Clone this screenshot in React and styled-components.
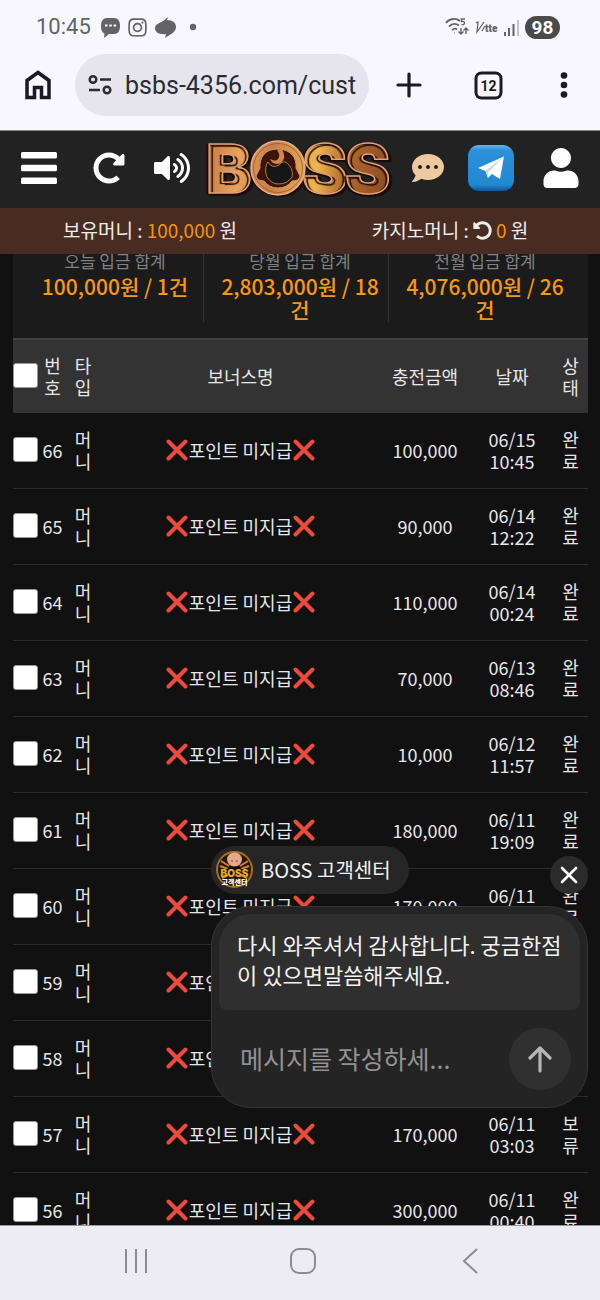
import React from 'react';
import styled, { createGlobalStyle } from 'styled-components';
import { FaBars, FaCommentDots, FaInstagram, FaRedoAlt, FaUndoAlt, FaUser, FaVolumeUp } from 'react-icons/fa';

const GlobalStyle = createGlobalStyle`
  * {
    box-sizing: border-box;
  }

  body {
    margin: 0;
    background-color: #111;
    font-family: "Noto Sans CJK KR", sans-serif;
  }

  button {
    padding: 0;
    border: 0;
    background: none;
    color: inherit;
    font: inherit;
  }
`;

const Screen = styled.div`
  display: flex;
  flex-direction: column;
  height: 100vh;
  overflow: hidden;
`;

const StatusBar = styled.div`
  display: flex;
  flex: none;
  align-items: center;
  justify-content: space-between;
  height: 54px;
  padding: 0 40px 0 36px;
  background-color: #f8f7ff;
  color: #636368;
  font-family: Roboto, sans-serif;
`;

const StatusGroup = styled.div`
  display: flex;
  align-items: center;
  gap: 6px;
`;

const Clock = styled.span`
  margin-right: 3px;
  font-size: 22px;
  line-height: 28px;
`;

const Battery = styled.span`
  width: 35px;
  border-radius: 12px;
  background-color: #4a4a4d;
  color: #fff;
  font-size: 19px;
  font-weight: 700;
  line-height: 23px;
  text-align: center;
`;

const Toolbar = styled.div`
  display: grid;
  flex: none;
  grid-template-columns: 75px minmax(0, 1fr) 80px 78px 73px;
  align-items: center;
  padding-bottom: 14px;
  background-color: #f8f7ff;
  color: #1a1a20;
`;

const IconButton = styled.button`
  display: flex;
  align-items: center;
  justify-content: center;
  min-height: 44px;
`;

const AddressBar = styled.label`
  display: flex;
  align-items: center;
  gap: 12px;
  height: 62px;
  padding: 0 8px 0 12px;
  border-radius: 31px;
  background-color: #e6e5ee;
`;

const AddressIcon = styled.svg`
  flex: none;
`;

const AddressInput = styled.input`
  flex: 1;
  min-width: 0;
  padding: 0;
  border: 0;
  outline: 0;
  background: none;
  color: #2b2b31;
  font-family: Roboto, sans-serif;
  font-size: 25px;
`;

const Page = styled.main`
  position: relative;
  display: flex;
  flex: 1;
  flex-direction: column;
  min-height: 0;
  overflow: hidden;
`;

const SiteHeader = styled.header`
  display: grid;
  flex: none;
  grid-template-columns: 78px 62px 64px 1fr 64px 62px 78px;
  align-items: center;
  height: 78px;
  padding-bottom: 4px;
  border-top: 1px solid #85858a;
  background-color: #222;
  color: #fff;
`;

const LogoLink = styled.a`
  display: flex;
  justify-content: center;
  padding-top: 2px;
`;

const LogoDrawing = styled.svg`
  overflow: visible;
`;

const LogoText = styled.text`
  font-family: Inter, sans-serif;
  font-size: 68px;
  font-weight: 900;
  text-shadow: 3px 2px 1px #1c0b06, -2px 1px 1px #1c0b06;
`;

const MoneyBar = styled.div`
  display: grid;
  flex: none;
  grid-template-columns: 1fr 1fr;
  padding-bottom: 2px;
  background-color: #482c21;
  color: #eee;
  font-size: 19px;
  line-height: 44px;
  text-align: center;
`;

const Amount = styled.span`
  color: #f39314;
`;

const UndoButton = styled.button`
  margin-right: 4px;
  font-size: 19px;
  line-height: 19px;
  vertical-align: -2px;
`;

const History = styled.section`
  flex: 1;
  min-height: 0;
  padding: 0 12px 0 13px;
  overflow: hidden;
`;

const Summary = styled.dl`
  display: grid;
  grid-template-columns: repeat(3, 1fr);
  gap: 8px;
  height: 84px;
  margin: 0;
  padding: 0 14px 16px;
  background-color: #1b1b1b;
`;

const SummaryItem = styled.div`
  padding: 0 8px;
  border-right: 1px solid #333;
  text-align: center;

  &:last-child {
    border-right-color: transparent;
  }
`;

const SummaryLabel = styled.dt`
  margin-top: -5px;
  color: #808080;
  font-size: 17px;
  line-height: 24px;
`;

const SummaryValue = styled.dd`
  margin: 0;
  padding-top: 2px;
  color: #f8980f;
  font-size: 21px;
  font-weight: 500;
  line-height: 23px;
`;

const Table = styled.table`
  width: 100%;
  border-collapse: separate;
  border-spacing: 0;
  table-layout: fixed;
  color: #e6e6e6;
  font-size: 18px;
  line-height: 22px;
  text-align: center;
`;

const Col = styled.col`
  width: ${props => props.$width}px;
`;

const HeadCell = styled.th`
  height: 75px;
  padding: 0 ${props => props.$pad || 0}px 2px;
  border-top: 2px solid #424242;
  background-color: #333;
  font-weight: 400;
`;

const Cell = styled.td`
  height: 76px;
  padding: 0 ${props => props.$pad || 0}px 2px;
  border-bottom: 1px solid #2d2d2d;
  word-break: break-all;
`;

const Line = styled.span`
  display: block;
`;

const Checkbox = styled.input`
  display: block;
  width: 25px;
  height: 25px;
  margin: 0;
  appearance: none;
  border: 1px solid #999;
  border-radius: 3px;
  background-color: #fff;

  &:checked {
    background-color: #f39314;
  }
`;

const BonusName = styled.span`
  display: flex;
  align-items: center;
  justify-content: center;
  gap: 1px;
`;

const ChatWidget = styled.aside`
  position: absolute;
  right: 12px;
  bottom: 117px;
  width: 377px;
  max-width: calc(100% - 24px);
  color: #f2f2f2;
`;

const ChatTop = styled.div`
  display: flex;
  align-items: flex-end;
  justify-content: space-between;
  margin-bottom: 12px;
`;

const ChatTitle = styled.div`
  display: flex;
  align-items: center;
  gap: 8px;
  height: 48px;
  padding: 0 18px 2px 5px;
  border-radius: 24px;
  background-color: #262626;
  font-size: 20px;
`;

const CloseButton = styled.button`
  display: flex;
  align-items: center;
  justify-content: center;
  width: 38px;
  height: 38px;
  border-radius: 50%;
  background-color: #2b2b2b;
`;

const ChatCard = styled.div`
  padding: 7px;
  border: 1px solid #353535;
  border-radius: 40px;
  background-color: #242424;
`;

const ChatMessage = styled.p`
  margin: 0;
  padding: 15px 18px 21px;
  border-radius: 32px 32px 8px 8px;
  background-color: #2f2f2f;
  font-size: 22px;
  line-height: 30px;
  word-break: break-all;
`;

const ChatForm = styled.form`
  display: flex;
  align-items: center;
  gap: 12px;
  padding: 18px 9px 10px 21px;
`;

const ChatInput = styled.input`
  flex: 1;
  min-width: 0;
  padding: 0 0 3px;
  border: 0;
  outline: 0;
  background: none;
  color: #fff;
  font-family: inherit;
  font-size: 25px;

  &::placeholder {
    color: #929292;
  }
`;

const SendButton = styled.button`
  display: flex;
  align-items: center;
  justify-content: center;
  width: 62px;
  height: 62px;
  border-radius: 50%;
  background-color: #303030;
`;

const NavBar = styled.nav`
  display: grid;
  flex: none;
  grid-template-columns: repeat(3, 1fr);
  align-items: center;
  height: 75px;
  padding: 0 46px 4px 52px;
  border-top: 1px solid #98989c;
  background-color: #edecf3;
  color: #8b8b90;
`;

const summaries = [
  { label: '오늘 입금 합계', value: '100,000원 / 1건' },
  { label: '당월 입금 합계', value: '2,803,000원 / 18건' },
  { label: '전월 입금 합계', value: '4,076,000원 / 26건' },
];

const rows = [
  { id: 66, amount: '100,000', date: '06/15', time: '10:45', status: '완료' },
  { id: 65, amount: '90,000', date: '06/14', time: '12:22', status: '완료' },
  { id: 64, amount: '110,000', date: '06/14', time: '00:24', status: '완료' },
  { id: 63, amount: '70,000', date: '06/13', time: '08:46', status: '완료' },
  { id: 62, amount: '10,000', date: '06/12', time: '11:57', status: '완료' },
  { id: 61, amount: '180,000', date: '06/11', time: '19:09', status: '완료' },
  { id: 60, amount: '170,000', date: '06/11', time: '17:30', status: '완료' },
  { id: 59, amount: '100,000', date: '06/11', time: '12:15', status: '완료' },
  { id: 58, amount: '100,000', date: '06/11', time: '05:20', status: '완료' },
  { id: 57, amount: '170,000', date: '06/11', time: '03:03', status: '보류' },
  { id: 56, amount: '300,000', date: '06/11', time: '00:40', status: '완료' },
];

function BossLogo() {
  return (
    <LogoDrawing width="186" height="60" viewBox="0 0 186 60" role="img" aria-label="BOSS">
      <defs>
        <linearGradient id="bronze" x1="0" y1="0" x2="186" y2="20" gradientUnits="userSpaceOnUse">
          <stop offset="0" stopColor="#c07a42" />
          <stop offset="0.18" stopColor="#e9a35c" />
          <stop offset="0.35" stopColor="#c67f48" />
          <stop offset="0.6" stopColor="#efb550" />
          <stop offset="0.75" stopColor="#b06b2c" />
          <stop offset="1" stopColor="#8d4a20" />
        </linearGradient>
      </defs>
      <LogoText x="-1 45 95 138" y="54" fill="url(#bronze)" stroke="#e0a07a" strokeWidth="1.500">BOSS</LogoText>
      <circle cx="71" cy="29" r="27" fill="url(#bronze)" stroke="#e6ab88" strokeWidth="1.500" />
      <circle cx="71" cy="29" r="24.500" fill="none" stroke="#94522f" strokeWidth="0.700" />
      <path d="M70 10C58 10 52 19 53 29l-4 8q1 5 8 5 5 7 14 7t14-7q7 0 8-5l-4-8c1-10-5-19-19-19z" fill="#3d140a" stroke="#d8936a" />
      <path d="M61 23q4 7 11 3 5-6 9-1c4 4 5 9 4 13q-5 7-13 7t-12-7c-2-5-2-11 1-15z" fill="#161616" stroke="#b87350" />
      <path d="M75 10q5 9-1 14-8 3-11-4 6 3 8 0 3-4-1-9z" fill="#d0864e" />
    </LogoDrawing>
  );
}

function Cross() {
  return (
    <svg width="22" height="22" viewBox="0 0 22 22" aria-hidden="true">
      <path d="M2.500 2.500l17 17M19.500 2.500L2.500 19.500" stroke="#ec4a3f" strokeWidth="4" strokeLinecap="round" />
    </svg>
  );
}

function Avatar() {
  return (
    <svg width="37" height="37" viewBox="0 0 37 37" aria-hidden="true">
      <circle cx="18.500" cy="18.500" r="17.500" fill="#241609" stroke="#a4701f" strokeWidth="2" />
      <path d="M4 15l8 3M5 10l8 5M33 15l-8 3M32 10l-8 5M6 27l6-3M31 27l-6-3" stroke="#c98a22" strokeWidth="2" />
      <path d="M9 19q9-7 19 0l-4 5H13z" fill="#0c0c10" />
      <ellipse cx="18.500" cy="8.500" rx="7.500" ry="7" fill="#e5a88d" />
      <circle cx="16" cy="10" r="0.800" fill="#60352a" />
      <circle cx="21" cy="10" r="0.800" fill="#60352a" />
      <text x="18.500" y="26" fill="#e8a532" fontFamily="Inter, sans-serif" fontSize="10" fontWeight="900" textAnchor="middle">BOSS</text>
      <text x="18.500" y="34" fill="#fff" fontFamily="Noto Sans CJK KR, sans-serif" fontSize="7" fontWeight="900" textAnchor="middle">고객센터</text>
    </svg>
  );
}

function PhoneStatus() {
  return (
    <StatusBar>
      <StatusGroup>
        <Clock>10:45</Clock>
        <svg width="21" height="21" viewBox="0 0 21 21" aria-hidden="true">
          <path d="M7 1h7c4 0 6 3 6 8s-2 8-6 8H9l-5 4 .500-4.500C2 15.500 1 13 1 9c0-5 2-8 6-8z" fill="#636368" />
          <path d="M5 8.500h2.500M9.300 8.500h2.500M13.600 8.500h2.500" stroke="#fff" strokeWidth="2" />
        </svg>
        <FaInstagram size={21} />
        <svg width="23" height="21" viewBox="0 0 23 21" aria-hidden="true">
          <path d="M14 0l-1 3c6 0 9 3 9 7 0 5-5 7-11 11l1-4C5 18 1 15 1 11c0-5 6-4 13-11z" fill="#636368" />
        </svg>
        <svg width="19" height="20" viewBox="0 0 19 20" aria-hidden="true">
          <circle cx="10" cy="10" r="3.200" fill="#636368" />
        </svg>
      </StatusGroup>
      <StatusGroup>
        <svg width="24" height="20" viewBox="0 0 24 20" fill="none" stroke="#636368" strokeWidth="1.800" aria-hidden="true">
          <path d="M1 6c4-5 10-5 14-2M4 9.500c3-3 7-3 10-1M7 13c2-1.500 4-1.500 5-.500" />
          <path d="M9 16h.500M20 2h-3.500v2.500c4-1 4 4 0 3M16 11v6m-2.500-2.500L16 17l2.500-2.500M21 17v-6m-2.500 2.500L21 11l2.500 2.500" strokeWidth="1.400" />
        </svg>
        <svg width="23" height="16" viewBox="0 0 23 16" aria-hidden="true">
          <path d="M1 4l2-1-1 10L9 3M7 12l3-5" fill="none" stroke="#636368" strokeWidth="1.200" />
          <text x="10" y="13" fill="#636368" fontFamily="Roboto, sans-serif" fontSize="10" fontWeight="900">tte</text>
        </svg>
        <svg width="15" height="17" viewBox="0 0 15 17" strokeWidth="2" aria-hidden="true">
          <path d="M1 13v4M5 9v8M9.500 5v12" stroke="#636368" />
          <path d="M14 1v16" stroke="#c3c2c8" />
        </svg>
        <Battery>98</Battery>
      </StatusGroup>
    </StatusBar>
  );
}

function BrowserToolbar() {
  return (
    <Toolbar>
      <IconButton aria-label="홈">
        <svg width="26" height="30" viewBox="0 0 26 30" fill="none" stroke="currentColor" strokeWidth="3.500">
          <path d="M2 27.500V10.500L13 2.500l11 8v17h-7.500V17.500h-7v10z" />
        </svg>
      </IconButton>
      <AddressBar>
        <AddressIcon width="26" height="22" viewBox="0 0 26 22" fill="none" stroke="#2b2b31" strokeWidth="2.500" aria-hidden="true">
          <circle cx="6" cy="5.500" r="3.300" />
          <circle cx="20" cy="16" r="3.300" />
          <path d="M13 5.500h11M2 16h11" />
        </AddressIcon>
        <AddressInput aria-label="주소" defaultValue="bsbs-4356.com/cust" />
      </AddressBar>
      <IconButton aria-label="새 탭">
        <svg width="26" height="26" viewBox="0 0 26 26" fill="none" stroke="currentColor" strokeWidth="3.200" strokeLinecap="round">
          <path d="M13 2v22M2 13h22" />
        </svg>
      </IconButton>
      <IconButton aria-label="탭 12개">
        <svg width="29" height="29" viewBox="0 0 29 29">
          <rect x="2" y="2" width="25" height="25" rx="5.500" fill="none" stroke="currentColor" strokeWidth="3" />
          <text x="14.500" y="19.500" fill="currentColor" fontFamily="Roboto, sans-serif" fontSize="14" fontWeight="700" textAnchor="middle">12</text>
        </svg>
      </IconButton>
      <IconButton aria-label="메뉴">
        <svg width="8" height="26" viewBox="0 0 8 26" fill="currentColor">
          <circle cx="4" cy="3.500" r="3.300" />
          <circle cx="4" cy="13" r="3.300" />
          <circle cx="4" cy="22.500" r="3.300" />
        </svg>
      </IconButton>
    </Toolbar>
  );
}

function TopMenu() {
  return (
    <SiteHeader>
      <IconButton aria-label="메뉴 열기">
        <svg width="36" height="32" viewBox="0 0 36 32" fill="currentColor">
          <rect width="36" height="6.500" rx="1.500" />
          <rect y="12.700" width="36" height="6.500" rx="1.500" />
          <rect y="25.500" width="36" height="6.500" rx="1.500" />
        </svg>
      </IconButton>
      <IconButton aria-label="새로고침"><FaRedoAlt size={32} /></IconButton>
      <IconButton aria-label="소리"><FaVolumeUp size={36} /></IconButton>
      <LogoLink href="#home"><BossLogo /></LogoLink>
      <IconButton aria-label="채팅"><FaCommentDots size={32} color="#ecc9a0" /></IconButton>
      <IconButton aria-label="텔레그램">
        <svg width="48" height="48" viewBox="0 0 48 48">
          <defs>
            <linearGradient id="telegram" x1="0" y1="0" x2="0" y2="1">
              <stop offset="0" stopColor="#69b5e8" />
              <stop offset="0.12" stopColor="#2b90d8" />
              <stop offset="0.86" stopColor="#2288d2" />
              <stop offset="1" stopColor="#0b5797" />
            </linearGradient>
          </defs>
          <rect x="1" y="1" width="46" height="46" rx="11" fill="url(#telegram)" />
          <path d="M11 24L37 12.500 33 35l-8-5-4 4-2.500-7z" fill="#fff" />
          <path d="M11 24l7.500 3L37 12.500 21 28.500V34l-2.500-7z" fill="#c4d8ea" />
        </svg>
      </IconButton>
      <IconButton aria-label="내 정보"><FaUser size={40} /></IconButton>
    </SiteHeader>
  );
}

function HistoryTable() {
  return (
    <Table>
      <colgroup>
        <Col $width={28} />
        <Col $width={23} />
        <Col $width={38} />
        <col />
        <Col $width={92} />
        <Col $width={82} />
        <Col $width={35} />
      </colgroup>
      <thead>
        <tr>
          <HeadCell><Checkbox type="checkbox" aria-label="전체 선택" /></HeadCell>
          <HeadCell>번호</HeadCell>
          <HeadCell $pad={8}>타입</HeadCell>
          <HeadCell>보너스명</HeadCell>
          <HeadCell>충전금액</HeadCell>
          <HeadCell>날짜</HeadCell>
          <HeadCell $pad={5}>상태</HeadCell>
        </tr>
      </thead>
      <tbody>
        {rows.map(row => (
          <tr key={row.id}>
            <Cell><Checkbox type="checkbox" aria-label={`${row.id}번 선택`} /></Cell>
            <Cell>{row.id}</Cell>
            <Cell $pad={8}>머니</Cell>
            <Cell>
              <BonusName><Cross />포인트 미지급<Cross /></BonusName>
            </Cell>
            <Cell>{row.amount}</Cell>
            <Cell>
              <Line>{row.date}</Line>
              <Line>{row.time}</Line>
            </Cell>
            <Cell $pad={5}>{row.status}</Cell>
          </tr>
        ))}
      </tbody>
    </Table>
  );
}

function SupportChat() {
  return (
    <ChatWidget>
      <ChatTop>
        <ChatTitle><Avatar />BOSS 고객센터</ChatTitle>
        <CloseButton aria-label="닫기">
          <svg width="18" height="18" viewBox="0 0 18 18" stroke="#fff" strokeWidth="2.600" strokeLinecap="round">
            <path d="M2 2l14 14M16 2L2 16" />
          </svg>
        </CloseButton>
      </ChatTop>
      <ChatCard>
        <ChatMessage>다시 와주셔서 감사합니다. 궁금한점이 있으면말씀해주세요.</ChatMessage>
        <ChatForm onSubmit={e => e.preventDefault()}>
          <ChatInput aria-label="메시지" placeholder="메시지를 작성하세..." />
          <SendButton aria-label="보내기">
            <svg width="24" height="28" viewBox="0 0 24 28" fill="none" stroke="#b5b5b5" strokeWidth="3.200" strokeLinecap="round" strokeLinejoin="round">
              <path d="M12 26V3M2 13L12 3l10 10" />
            </svg>
          </SendButton>
        </ChatForm>
      </ChatCard>
    </ChatWidget>
  );
}

export default function App() {
  return (
    <Screen>
      <GlobalStyle />
      <PhoneStatus />
      <BrowserToolbar />
      <Page>
        <TopMenu />
        <MoneyBar>
          <div>보유머니 : <Amount>100,000</Amount> 원</div>
          <div>
            카지노머니 : <UndoButton aria-label="회수"><FaUndoAlt /></UndoButton><Amount>0</Amount> 원
          </div>
        </MoneyBar>
        <History>
          <Summary>
            {summaries.map(item => (
              <SummaryItem key={item.label}>
                <SummaryLabel>{item.label}</SummaryLabel>
                <SummaryValue>{item.value}</SummaryValue>
              </SummaryItem>
            ))}
          </Summary>
          <HistoryTable />
        </History>
        <SupportChat />
      </Page>
      <NavBar>
        <IconButton aria-label="최근 앱">
          <svg width="24" height="26" viewBox="0 0 24 26" stroke="currentColor" strokeWidth="2">
            <path d="M2 1v24M12 1v24M22 1v24" />
          </svg>
        </IconButton>
        <IconButton aria-label="홈 화면">
          <svg width="26" height="26" viewBox="0 0 26 26" fill="none" stroke="currentColor" strokeWidth="2">
            <rect x="1" y="1" width="24" height="24" rx="8" />
          </svg>
        </IconButton>
        <IconButton aria-label="뒤로">
          <svg width="16" height="26" viewBox="0 0 16 26" fill="none" stroke="currentColor" strokeWidth="2">
            <path d="M15 1L2 13l13 12" />
          </svg>
        </IconButton>
      </NavBar>
    </Screen>
  );
}
